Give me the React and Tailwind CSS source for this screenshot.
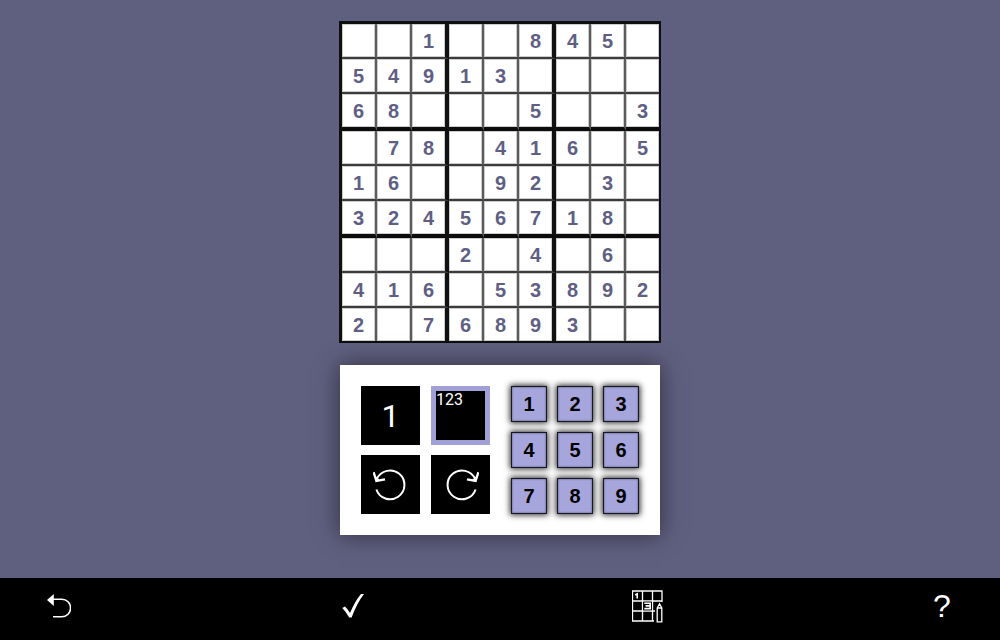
import React, { useState } from "react";

const PUZZLE = [
  "..1..845.",
  "54913....",
  "68...5..3",
  ".78.416.5",
  "16..92.3.",
  "32456718.",
  "...2.4.6.",
  "416.53892",
  "2.76893..",
];

function columnClass(c) {
  if (c === 8) return "w-[33px] border-r-0";
  if (c % 3 === 2) return "w-[37px] border-r-4 border-r-[#101212]";
  return "w-[35px] border-r-2 border-r-[#5a5c5c]";
}

function rowClass(r) {
  if (r === 8) return "h-[33px] border-b-0";
  if (r % 3 === 2) return "h-[37px] border-b-4 border-b-[#0c0c0c]";
  return "h-[35px] border-b-2 border-b-[#3c3c3c]";
}

function Board() {
  return (
    <table
      aria-label="Sudoku"
      className="table-fixed border-separate border-spacing-0 border-t-3 border-l-3 border-r-2 border-b-2 border-[#0e1010] bg-[#3c3c3c]"
    >
      <tbody>
        {PUZZLE.map((row, r) => (
          <tr key={r}>
            {[...row].map((n, c) => (
              <td
                key={c}
                className={`bg-white bg-clip-padding p-0 text-center align-middle text-xl leading-6 font-bold text-[#5f5f84] shadow-[inset_0_0_0_1px_rgba(0,0,0,0.2)] ${columnClass(c)} ${rowClass(r)}`}
              >
                {n === "." ? "" : n}
              </td>
            ))}
          </tr>
        ))}
      </tbody>
    </table>
  );
}

function TurnIcon({ flip }) {
  return (
    <svg
      viewBox="0 0 36 36"
      className={`size-9 ${flip ? "-scale-x-100" : ""}`}
      fill="none"
      stroke="currentColor"
      strokeWidth="2"
      aria-hidden="true"
    >
      <path d="M3.4 22.5A14.4 14.4 0 1 0 3.9 12" />
      <path d="M0.6 5.2L3.4 14L12 12.4" strokeWidth="2.3" />
      <path d="M2.6 14.6L3 9.5L7.1 13.2Z" fill="currentColor" stroke="none" />
    </svg>
  );
}

function Controls() {
  const [notes, setNotes] = useState(true);
  const tool = "size-[59px] bg-black text-white font-['Roboto',sans-serif]";
  const selected = "border-5 border-[#a09fd6]";
  return (
    <section className="flex w-80 justify-between bg-white p-[21px] shadow-[0_0_22px_rgba(0,0,0,0.5)]">
      <div className="grid grid-cols-2 gap-x-[11px] gap-y-2.5">
        <button
          type="button"
          aria-label="Enter digit 1"
          onClick={() => setNotes(false)}
          className={`${tool} text-[32px] leading-8 ${notes ? "" : selected}`}
        >
          1
        </button>
        <button
          type="button"
          aria-label="Enter notes 123"
          onClick={() => setNotes(true)}
          className={`${tool} flex items-start text-base leading-[18px] ${notes ? selected : ""}`}
        >
          123
        </button>
        <button type="button" aria-label="Undo" className={`${tool} grid place-items-center`}>
          <TurnIcon />
        </button>
        <button type="button" aria-label="Redo" className={`${tool} grid place-items-center`}>
          <TurnIcon flip />
        </button>
      </div>
      <div className="grid grid-cols-3 content-between gap-x-2.5">
        {[1, 2, 3, 4, 5, 6, 7, 8, 9].map((n) => (
          <button
            key={n}
            type="button"
            className="size-9 border border-[#17171f] bg-[#a6a5dc] text-xl leading-5 font-bold text-black shadow-[0_0_6px_1px_rgba(0,0,0,0.85),inset_0_0_2px_#44446a]"
          >
            {n}
          </button>
        ))}
      </div>
    </section>
  );
}

function Toolbar() {
  return (
    <footer className="flex h-[62px] items-center justify-between bg-black pr-[51px] pb-1.5 pl-[47px] text-white">
      <button type="button" aria-label="Back">
        <svg viewBox="0 0 24 24" className="size-6" aria-hidden="true">
          <path d="M0 6L6.8 0V12Z" fill="currentColor" />
          <path d="M6 5.2H14.8A8.8 8.8 0 0 1 14.8 22.8H6" fill="none" stroke="currentColor" strokeWidth="1.6" />
        </svg>
      </button>
      <button type="button" aria-label="Check">
        <svg viewBox="-2 0 24 26" className="h-[26px] w-6" aria-hidden="true">
          <path d="M0.3 15L2.9 13.6Q5.5 15.8 8 20Q13 8 19 1H22Q15 10 9.6 24.6H7.2Q4.3 19 0.3 15Z" fill="currentColor" />
        </svg>
      </button>
      <button type="button" aria-label="Fill in notes">
        <svg viewBox="1 0 32 34" className="h-[34px] w-8" fill="none" stroke="currentColor" aria-hidden="true">
          <path d="M1 2H31.5M1 12H31.5M1 22H24M1 32H23M1.5 1.5V32M11.5 1.5V32M21.5 1.5V32M31 1.5V13" strokeWidth="1.3" />
          <path d="M4.2 6L6.2 4.8V9.6" strokeWidth="1.6" />
          <path d="M12.3 12.7V21.3H20.7V12.7Z" fill="black" stroke="none" />
          <path d="M13.3 14.2H19.2V19.6H13.3M14.6 16.9H19.2" strokeWidth="1.6" />
          <path d="M24 14H32V34H24Z" fill="black" stroke="none" />
          <path d="M26.2 19L28.5 14.8L30.8 19V32.8H26.2ZM26.2 19H30.8M28.5 14.8V17" strokeWidth="1.3" />
        </svg>
      </button>
      <button type="button" aria-label="Help" className="w-4 text-center text-[32px] leading-8">
        ?
      </button>
    </footer>
  );
}

export default function App() {
  return (
    <div className="flex min-h-screen flex-col bg-[#5f5f7f] font-['Liberation_Sans',Arial,sans-serif]">
      <main className="flex grow flex-col items-center gap-[22px] pt-[21px] pb-8">
        <Board />
        <Controls />
      </main>
      <Toolbar />
    </div>
  );
}
